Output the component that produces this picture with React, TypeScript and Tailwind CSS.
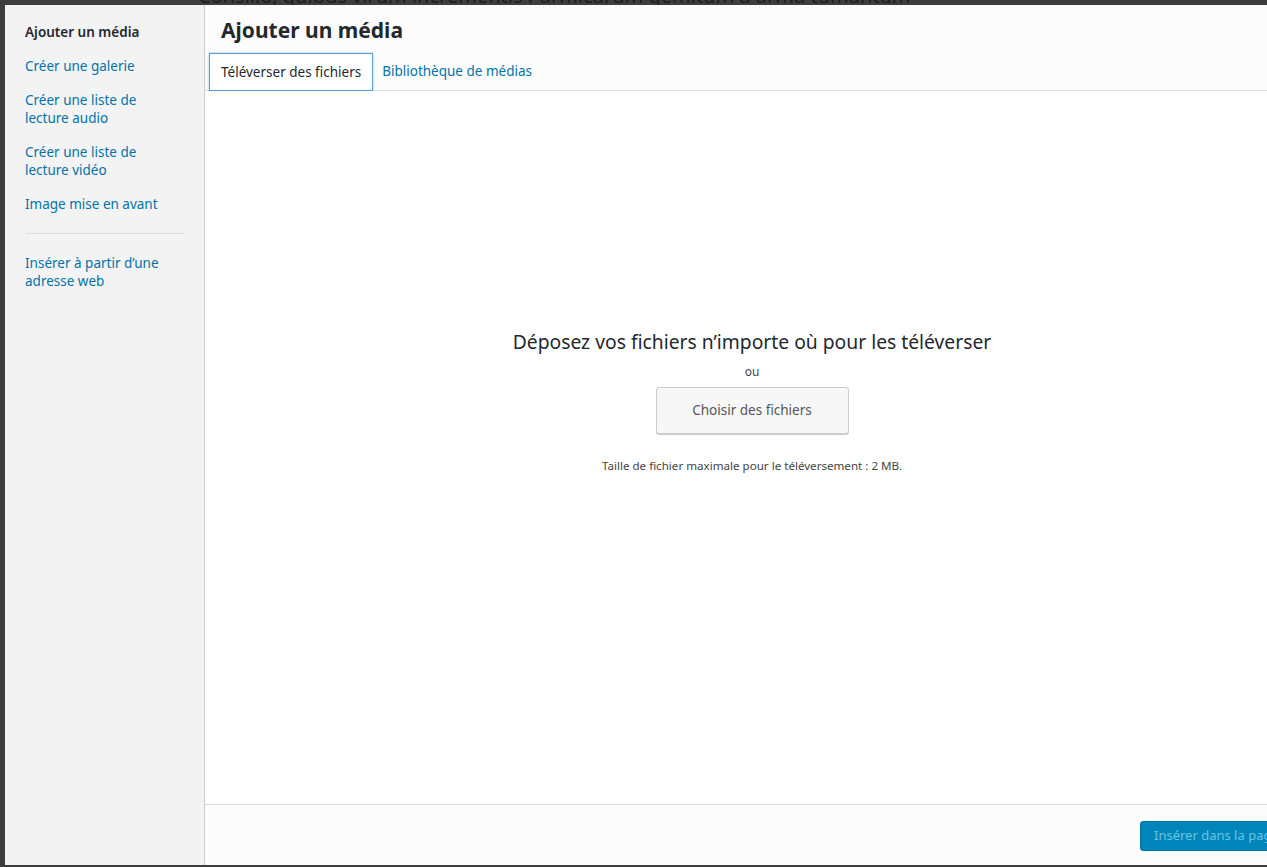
import React from 'react';

const sideLinks = [
    ['Créer une galerie'],
    ['Créer une liste de', 'lecture audio'],
    ['Créer une liste de', 'lecture vidéo'],
    ['Image mise en avant'],
];

export default function App() {
    return (
        <div className="relative h-[867px] w-[1267px] overflow-hidden bg-[#3d3d3d] font-['Noto_Sans',sans-serif]">
            {/* page content peeking behind the modal */}
            <div className="absolute left-[198px] top-[-16px] text-[20px] leading-[24px] text-[#1e1e1e]">
                Consilio, quibus virum incrementis Parmicarum gemitum a arma tumantum
            </div>

            <div className="absolute left-[5px] top-[5px] right-[-43px] bottom-[2px] flex bg-[#fcfcfc]">
                {/* sidebar */}
                <aside className="flex w-[200px] shrink-0 flex-col border-r border-[#cccccc] bg-[#f3f3f3] px-5 pt-[18px]">
                    <div className="text-[13.5px] font-semibold leading-[18px] text-[#23282d]">Ajouter un média</div>
                    <nav className="mt-4 flex flex-col gap-4">
                        {sideLinks.map((lines) => (
                            <a key={lines[0]} className="text-[13.5px] leading-[18px] text-[#0073aa]">
                                {lines.map((l) => (
                                    <div key={l}>{l}</div>
                                ))}
                            </a>
                        ))}
                    </nav>
                    <div className="mt-[20px] h-px w-[159px] bg-[#dddddd]" />
                    <a className="mt-[20px] text-[13.5px] leading-[18px] text-[#0073aa]">
                        <div>Insérer à partir d’une</div>
                        <div>adresse web</div>
                    </a>
                </aside>

                {/* main */}
                <div className="flex min-w-0 flex-1 flex-col">
                    <div className="px-4 pt-[9px]">
                        <h1 className="text-[21px] font-bold leading-[32px] text-[#23282d]">Ajouter un média</h1>
                    </div>
                    <div className="mt-[7px] flex items-end border-b border-[#dddddd] pl-1">
                        <div className="mb-[-1px] flex h-[38px] items-center border border-[#5b9dd9] bg-white px-[11px] text-[13.5px] text-[#23282d] shadow-[0_0_2px_rgba(30,140,190,0.5)]">
                            Téléverser des fichiers
                        </div>
                        <div className="flex h-[37px] items-center px-[9px] text-[13.5px] text-[#0073aa]">
                            Bibliothèque de médias
                        </div>
                    </div>

                    <div className="flex flex-1 flex-col items-center bg-white pr-[11px] pt-[239px]">
                        <div className="text-[19.3px] leading-[24px] text-[#23282d]">
                            Déposez vos fichiers n’importe où pour les téléverser
                        </div>
                        <div className="mt-[9px] text-[12px] leading-[18px] text-[#444444]">ou</div>
                        <button className="mt-[6px] h-[47px] w-[193px] rounded-[3px] border border-[#cccccc] bg-[#f7f7f7] text-[13.5px] text-[#555555] shadow-[0_1px_0_#cccccc]">
                            Choisir des fichiers
                        </button>
                        <div className="mt-[24px] text-[11.6px] leading-[16px] text-[#444444]">
                            Taille de fichier maximale pour le téléversement : 2 MB.
                        </div>
                    </div>

                    <div className="flex h-[61px] shrink-0 items-start justify-end border-t border-[#dddddd] bg-[#fcfcfc] pt-[16px]">
                        <button className="h-[30px] w-[170px] shrink-0 rounded-[3px] border border-[#0073aa] bg-[#0085ba] pl-[13px] text-left text-[13px] text-[#66c6e4]">
                            Insérer dans la page
                        </button>
                    </div>
                </div>
            </div>
        </div>
    );
}
